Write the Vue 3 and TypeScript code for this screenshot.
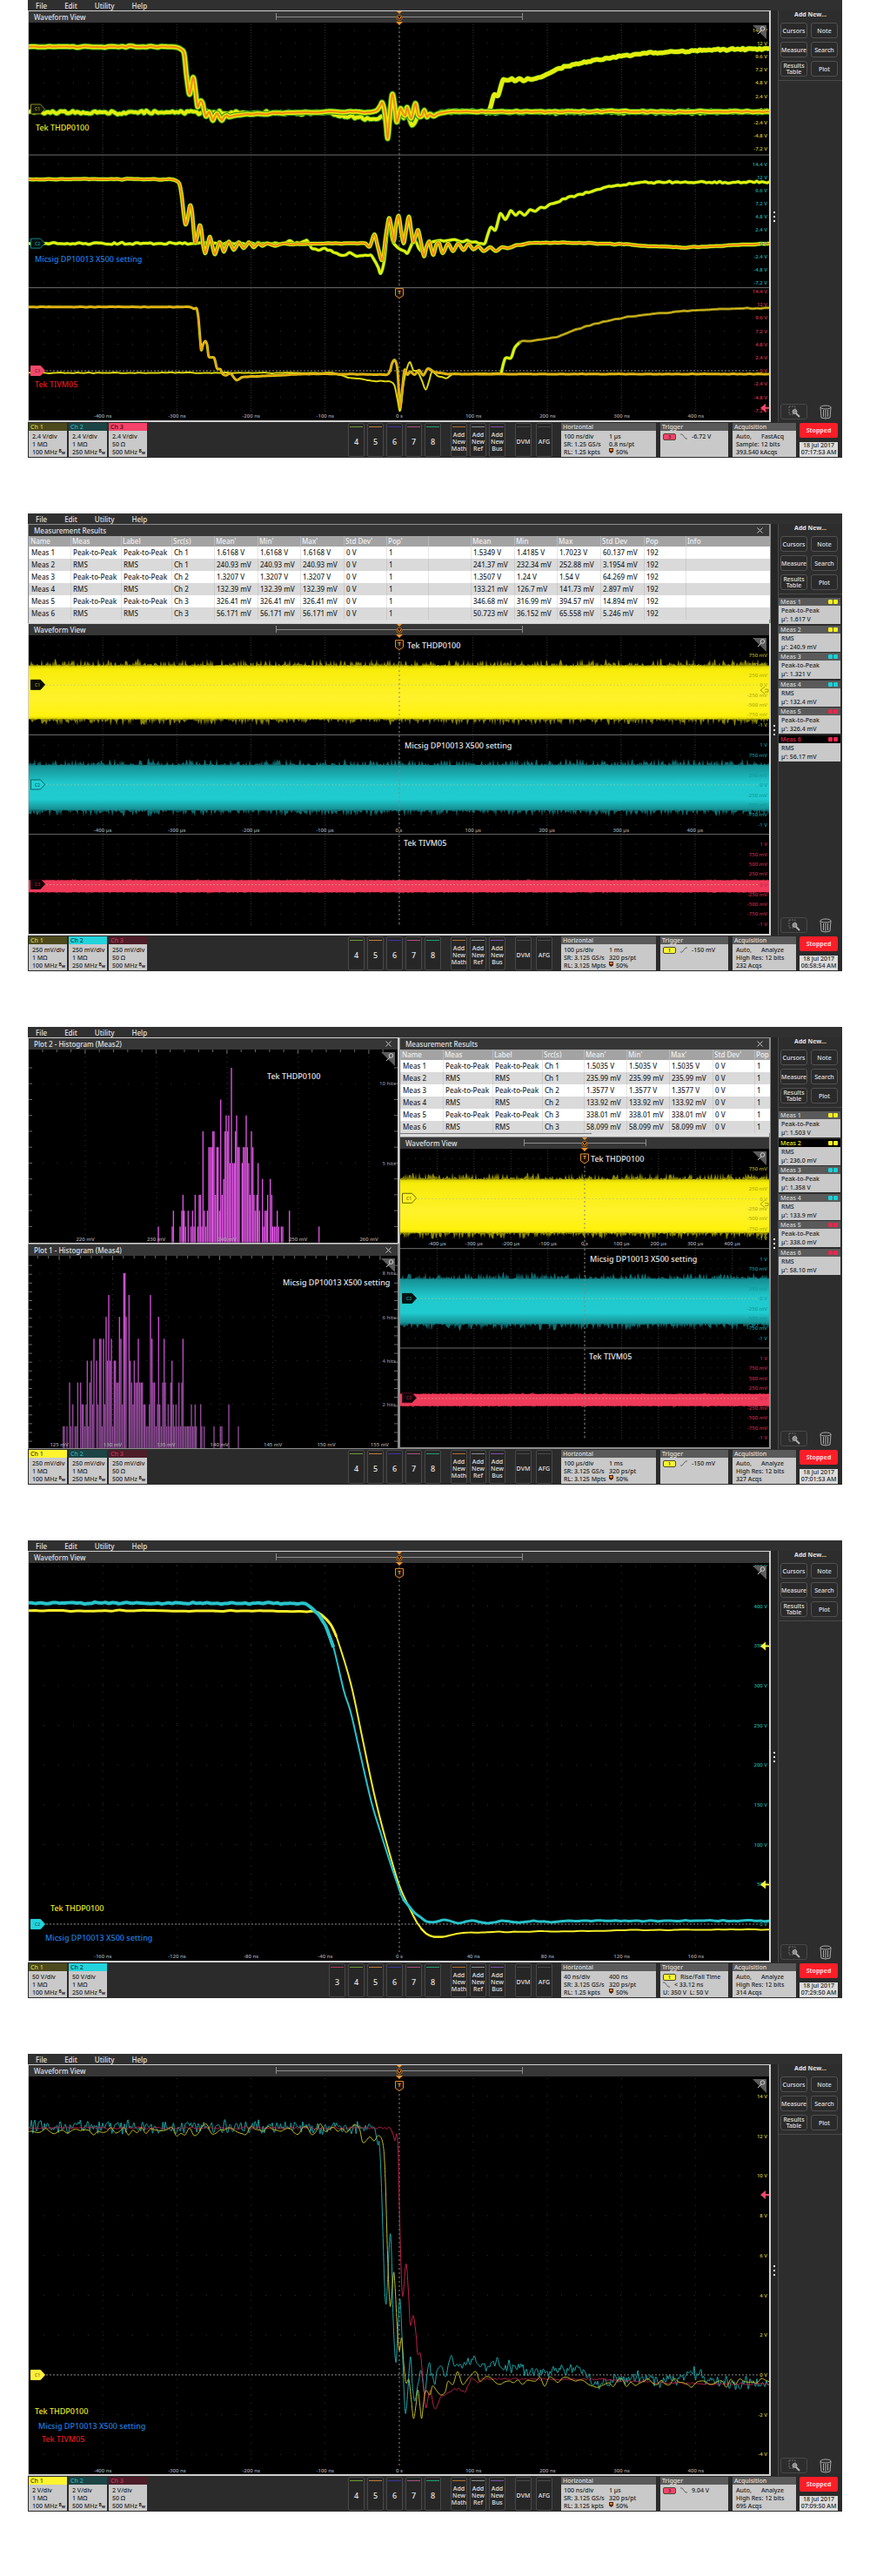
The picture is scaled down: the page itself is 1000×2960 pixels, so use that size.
<script setup lang="ts">
interface Stroke { d: string; color: string; width: number }
interface Band { spikes: string; core: string; dim: string; fill: string }
interface Label { x: number; y: number; text: string; color: string; anchor?: string; size?: string }
interface Tag { y: number; text: string; fill: string; line: string; ink: string }
interface Bar { x: number; y: number; h: number }
interface Plot {
  x: number; y: number; w: number; h: number
  columns: number[]; columnDash: string; rows: number[]; minor: number
  separators: number[]; zeros: number[]; centre: number | null
  bands: Band[]; strokes: Stroke[]; bars: Bar[]; ticks: string
  labels: Label[]; tags: Tag[]; badge: number | null
  arrows: { y: number; color: string; hollow?: boolean }[]
}
interface Table { widths: number[]; head: string[]; rows: string[][] }
interface Panel { title: string; bright: boolean; close?: boolean; overview?: boolean; table?: Table; scroll?: boolean; plot?: Plot }
interface Channel { name: string; bg: string; ink: string; lines: string[] }
interface Meas { name: string; kind: string; value: string; color: string; chips: number; active?: boolean }
interface Screen {
  columns: Panel[][]; channels: Channel[]; slots: { n: string; color: string }[]
  horizontal: string[]; trigger: { ch: string; color: string; rising: boolean; text: string; extra?: string[] }
  acquisition: string[]; time: string; meas: Meas[]
}

const YELLOW = '#d0d032'
const CYAN = '#18b6b6'
const RED = '#d83656'

/* deterministic noise, so every render draws the same traces */
function random(seed: number) {
  let a = seed
  return () => {
    a = (a + 0x6d2b79f5) | 0
    let t = Math.imul(a ^ (a >>> 15), 1 | a)
    t = (t + Math.imul(t ^ (t >>> 7), 61 | t)) ^ t
    return ((t ^ (t >>> 14)) >>> 0) / 4294967296
  }
}

type Point = [number, number]
type Scale = (y: number) => number
const scale = (f: number, offset: number): Scale => (y) => y * f - offset
const s1 = scale(0.3444, 0)
const s2 = scale(0.3508, 10.5)
const s3 = scale(0.3508, 10.2)
const s5 = scale(0.3508, 9.6)
const f1 = (n: number) => n.toFixed(1)

function parse(text: string): Point[] {
  return text.trim().split(/\s+/).map((p) => p.split(',').map(Number) as Point)
}

/* fills long segments with noisy samples */
function expand(points: Point[], step: number, noise: number, seed: number): Point[] {
  const rnd = random(seed)
  const out: Point[] = [points[0]]
  for (let i = 1; i < points.length; i++) {
    const [x0, y0] = points[i - 1]
    const [x1, y1] = points[i]
    const n = Math.floor((x1 - x0) / step)
    if (n > 1 && Math.abs(y1 - y0) < 60) {
      for (let k = 1; k < n; k++) {
        out.push([x0 + ((x1 - x0) * k) / n, y0 + ((y1 - y0) * k) / n + (rnd() + rnd() - 1) * noise])
      }
    }
    out.push([x1, y1])
  }
  return out
}

function curve(points: Point[], s: Scale): string {
  const p = points.map(([x, y]) => [x / 3, s(y)] as Point)
  let d = `M${f1(p[0][0])} ${f1(p[0][1])}`
  for (let i = 0; i < p.length - 1; i++) {
    const a = p[Math.max(0, i - 1)]
    const b = p[i]
    const c = p[i + 1]
    const e = p[Math.min(p.length - 1, i + 2)]
    const lim = (c[0] - b[0]) / 2
    const t1 = Math.min((c[0] - a[0]) / 6, lim)
    const t2 = Math.min((e[0] - b[0]) / 6, lim)
    const m1 = ((c[1] - a[1]) / (c[0] - a[0] || 1)) * t1
    const m2 = ((e[1] - b[1]) / (e[0] - b[0] || 1)) * t2
    d += `C${f1(b[0] + t1)} ${f1(b[1] + m1)} ${f1(c[0] - t2)} ${f1(c[1] - m2)} ${f1(c[0])} ${f1(c[1])}`
  }
  return d
}

function trace(text: string, s: Scale, step: number, noise: number, seed: number): string {
  return curve(expand(parse(text), step, noise, seed), s)
}

function glow(d: string, widths: number[], colors: string[]): Stroke[] {
  return widths.map((width, i) => ({ d, width, color: colors[i] }))
}

function band(x0: number, x1: number, top: number, bottom: number, amp: number, s: Scale, seed: number, fill: string, dim: string): Band {
  const rnd = random(seed)
  const edge = (y: number, dir: number, a: number, low: number) => {
    const pts: string[] = []
    for (let x = x0; x <= x1; x += 1) pts.push(`${x} ${f1(s(y + dir * (low + Math.pow(rnd(), 3) * a)))}`)
    return pts
  }
  const shape = (a: number, low: number) =>
    `M${edge(top, -1, a, low).join('L')}L${edge(bottom, 1, a, low).reverse().join('L')}Z`
  return { spikes: shape(amp, amp * 0.1), core: shape(amp * 0.15, 0), dim, fill }
}

function labels(x: number, s: Scale, ys: number[], texts: string[], color: string): Label[] {
  return texts.map((text, i) => ({ x, y: s(ys[i]), text, color, anchor: 'end', size: 'tiny' }))
}

function timeAxis(x0: number, pitch: number, y: number, texts: string[]): Label[] {
  return texts.map((text, i) => ({ x: x0 + pitch * (i + 1), y, text, color: '#a8a8a8', anchor: 'middle', size: 'tiny' }))
}

const note = (x: number, y: number, text: string, color: string): Label => ({ x, y, text, color, size: 'note' })
const range = (n: number, start: number, step: number) => Array.from({ length: n }, (_, i) => start + i * step)

const blank = (x: number, y: number, w: number, h: number): Plot => ({
  x, y, w, h, columns: [], columnDash: '1 2', rows: [], minor: 17, separators: [], zeros: [], centre: null,
  bands: [], strokes: [], bars: [], ticks: '', labels: [], tags: [], badge: null, arrows: []
})

const micros = ['-400 µs', '-300 µs', '-200 µs', '-100 µs', '0 s', '100 µs', '200 µs', '300 µs', '400 µs']
const nanos = ['-400 ns', '-300 ns', '-200 ns', '-100 ns', '0 s', '100 ns', '200 ns', '300 ns', '400 ns']
const mainColumns = range(9, 118, 85.2)

/* ---------- screen 1: three-slice FastAcq view ---------- */
const volts = ['14.4 V', '12 V', '9.6 V', '7.2 V', '4.8 V', '2.4 V', '0 V', '-2.4 V', '-4.8 V', '-7.2 V']
const c1Rows = range(10, 101, 43.9)
const c2Rows = range(10, 548, 43.9)
const c3Rows = range(10, 972, 44.2)
const outer = ['#2f8f1e', '#e4ee0c']
const heat = ['#2f8f1e', '#e4ee0c', '#f38a12']
const t1low = trace('97,374 1100,376 1180,385 1280,398 1305,396 1318,388 1330,405 1337,440 1345,375 1352,330 1362,395 1370,400 1381,380 1392,395 1400,375 1410,395 1420,418 1430,410 1440,390 1460,385 1500,382 1540,374 1600,374 2655,374', s1, 7, 7, 3)
const t1rise = trace('1686,372 1692,355 1703,318 1718,318 1728,285 1735,266 1750,268 1765,262 1775,270 1790,262 1805,270 1820,262 1835,265 1860,258 1890,246 1930,228 1980,215 2050,200 2140,187 2230,178 2320,172 2420,168 2540,164 2655,162', s1, 7, 4, 9)
const t1 = trace('97,156 590,156 610,158 625,165 635,180 643,250 652,312 658,300 664,262 669,265 675,310 681,356 687,345 692,336 699,345 704,370 710,388 716,380 722,374 728,388 734,402 741,388 748,378 756,390 765,402 773,390 782,385 790,390 800,388 840,382 900,380 1000,376 1120,373 1280,374 1300,368 1312,352 1318,342 1325,365 1331,410 1337,462 1343,400 1352,316 1360,345 1367,405 1374,390 1381,362 1390,378 1398,385 1404,358 1418,395 1432,345 1442,385 1455,387 1463,368 1472,390 1482,380 1495,388 1510,380 1545,373 1600,372 2655,373', s1, 12, 3, 21)
const t2low = trace('97,812 980,812 1000,803 1015,812 1060,803 1075,828 1100,835 1120,828 1150,842 1180,852 1205,843 1230,855 1280,852 1295,875 1313,912 1325,870 1335,780 1342,740 1352,800 1365,820 1380,832 1395,838 1405,845 1415,825 1430,800 1445,830 1460,840 1480,812 1500,805 1560,800 1620,806 1660,812 1672,812 1683,780 1693,758 1708,768 1718,735 1726,712 1742,732 1762,703 1778,718 1792,707 1808,718 1828,700 1845,705 1865,692 1880,693 1895,682 1920,675 1940,664 2000,648 2060,632 2130,618 2200,610 2300,608 2500,608 2655,606', s1, 9, 4, 33)
const t2 = trace('97,598 590,598 605,602 618,612 626,650 633,710 639,748 646,735 655,686 662,705 668,770 673,810 680,790 688,753 694,765 700,815 707,845 714,825 723,790 731,815 740,848 748,832 756,808 764,820 772,840 780,822 789,806 798,820 806,834 815,822 823,808 832,818 840,828 850,818 858,808 868,818 876,825 890,812 905,820 920,812 950,820 980,812 1010,815 1120,812 1260,812 1275,822 1291,782 1302,820 1318,868 1330,790 1341,728 1350,760 1359,805 1366,750 1375,720 1383,770 1392,812 1400,770 1410,722 1418,770 1425,808 1434,785 1442,768 1452,810 1462,855 1470,825 1480,805 1487,830 1495,850 1505,815 1515,812 1527,845 1545,812 1562,838 1580,812 1598,834 1615,814 1632,832 1650,822 1668,838 1690,825 1710,838 1730,825 1750,828 1780,818 1840,810 2000,810 2150,815 2250,822 2350,826 2450,822 2560,816 2655,812', s1, 14, 2, 41)
const t3low = trace('97,1244 1150,1244 1200,1260 1280,1270 1345,1273 1360,1285 1370,1330 1380,1370 1390,1290 1400,1240 1413,1208 1425,1235 1440,1240 1455,1270 1468,1300 1480,1270 1490,1240 1510,1255 1540,1262 1560,1248 1728,1246', s1, 14, 2, 51)
const t3step = trace('1728,1246 1742,1196 1762,1194 1775,1160 1795,1140', s1, 99, 0, 52)
const t3rise = trace('1790,1144 1800,1138 1830,1138 1870,1132 1920,1125 1970,1105 2050,1080 2150,1060 2260,1046 2400,1035 2530,1030 2655,1027', s1, 14, 2, 57)
const t3 = trace('97,1024 655,1024 668,1030 678,1030 684,1060 690,1130 694,1168 700,1150 708,1138 714,1150 720,1190 738,1194 748,1228 760,1232 768,1248 780,1252 795,1246 815,1268 835,1258 900,1255 1050,1248 1160,1248 1335,1250 1345,1238 1352,1212 1362,1202 1370,1230 1375,1300 1380,1360 1388,1290 1395,1235 1405,1250 1415,1240 1430,1250 1445,1235 1460,1252 1475,1230 1495,1240 1540,1248 1640,1248 2655,1248', s1, 14, 1, 61)

const plot1: Plot = {
  ...blank(33, 26, 851, 457),
  columns: mainColumns, columnDash: '1 2', rows: [...c1Rows, ...c2Rows, ...c3Rows].map(s1),
  separators: [s1(517), s1(960)], zeros: [s1(1237)], centre: 459,
  strokes: [
    ...glow(t1low, [6, 4], outer), ...glow(t1rise, [6, 5], outer), ...glow(t1, [7, 5, 2], heat),
    ...glow(t2low, [4, 3], outer), ...glow(t2, [5, 4, 2], heat),
    ...glow(t3low, [2], ['#dcd80e']), ...glow(t3step, [4, 3], outer), ...glow(t3rise, [3, 1], ['#8f8a14', '#f0c21c']), ...glow(t3, [3, 1], ['#d9cf14', '#f38a12'])
  ],
  labels: [
    ...labels(882, s1, c1Rows, volts, YELLOW), ...labels(882, s1, c2Rows, volts, CYAN), ...labels(882, s1, c3Rows, volts, RED),
    ...timeAxis(33, 85.2, s1(1388), nanos),
    note(41, s1(427), 'Tek THDP0100', '#e8e82a'), note(40, s1(865), 'Micsig DP10013 X500 setting', '#1f7fe0'), note(40, s1(1282), 'Tek TIVM05', '#e01c1c')
  ],
  tags: [
    { y: s1(364), text: 'C1', fill: '#15150a', line: '#8a8a1e', ink: '#a5a52c' },
    { y: s1(812), text: 'C2', fill: '#041414', line: '#148080', ink: '#1a9d9d' },
    { y: s1(1237), text: 'C3', fill: '#f2486a', line: '#f2486a', ink: '#7c1a30' }
  ],
  badge: s1(976), arrows: [{ y: s1(1361), color: '#f2486a' }]
}

/* ---------- screens 2 and 3: noise bands ---------- */
const r1 = [461, 493, 526, 560, 592, 624, 657, 689, 721]
const r2 = [789, 821, 856, 888, 919, 953, 985, 1016, 1049]
const r3 = [1114, 1146, 1179, 1211, 1246, 1277, 1309, 1342, 1375]
const mv = ['1 V', '750 mV', '500 mV', '250 mV', '0 V', '-250 mV', '-500 mV', '-750 mV', '-1 V']

function noisePlot(x: number, w: number, s: Scale, seed: number, axisY: number): Plot {
  const pitch = w / 10
  const mid = x + Math.round(w / 2)
  const right = x + w
  return {
    ...blank(x, 140, w, 343),
    columns: range(9, x + pitch, pitch), minor: w / 50, rows: [...r1, ...r2, ...r3].map(s),
    separators: [s(755), s(1081)], zeros: [s(592), s(919), s(1246)], centre: mid,
    bands: [
      band(x, right, 530, 702, 22, s, seed, 'url(#yellow)', '#8c8704'),
      band(x, right, 856, 1000, 22, s, seed + 1, 'url(#cyan)', '#0e6c70'),
      band(x, right, 1232, 1270, 4, s, seed + 2, '#f03a5a', '#b82440')
    ],
    labels: [
      ...labels(right - 2, s, r1.slice(1), mv.slice(1), '#b3ad18'), ...labels(right - 2, s, r2, mv, '#129a9c'), ...labels(right - 2, s, r3, mv, '#c42a4a'),
      ...timeAxis(x, pitch, s(axisY), micros),
      note(mid + (w > 500 ? 9 : 7), s(463), 'Tek THDP0100', '#e4e4e4'), note(mid + 6, s(789), 'Micsig DP10013 X500 setting', '#e4e4e4'), note(mid + 5, s(1110), 'Tek TIVM05', '#e4e4e4')
    ],
    badge: s(458), arrows: [{ y: s(609), color: '#a59f10', hollow: true }]
  }
}

const plot2: Plot = {
  ...noisePlot(33, 851, s2, 100, 1066),
  tags: [
    { y: s2(591), text: 'C1', fill: '#0c0c04', line: '#0c0c04', ink: '#a5a52c' },
    { y: s2(918), text: 'C2', fill: '#20d0d4', line: '#0a6466', ink: '#0a6466' },
    { y: s2(1244), text: 'C3', fill: '#100308', line: '#100308', ink: '#a32640' }
  ]
}
const plot3: Plot = {
  ...noisePlot(460, 424, s3, 200, 739),
  tags: [
    { y: s3(590), text: 'C1', fill: '#fff21c', line: '#6c6806', ink: '#6c6806' },
    { y: s3(918), text: 'C2', fill: '#031212', line: '#031212', ink: '#1a9d9d' },
    { y: s3(1244), text: 'C3', fill: '#100308', line: '#4a0c1c', ink: '#a32640' }
  ]
}

/* ---------- screen 3: histograms ---------- */
function bars(text: string, base: number, hit: number): Bar[] {
  return text.trim().split(/\s+/).map((p) => {
    const [x, n] = p.split(':').map(Number)
    const y = s3(base - n * hit)
    return { x: x / 3, y, h: s3(base) - y }
  })
}

function ticks(p: { x: number; y: number; w: number; h: number }, xs: number[], ys: number[], every: number, first: number): string {
  const top = xs.map((x, i) => `M${f1(x)} ${p.y}v${(i - first) % every === 0 ? 5 : 3}`).join('')
  const side = ys.map((y) => `M${p.x} ${f1(y)}h4M${p.x + p.w} ${f1(y)}h-4`).join('')
  return top + side
}

const h2 = blank(33, 26, 424, 222)
const hist2: Plot = {
  ...h2, columns: [98, 180, 261, 343, 424], columnDash: '1 5', rows: [s3(215), s3(475)], minor: 16.3,
  bars: bars('546:1 594:1 598:2 621:1 627:2 631:3 635:2 640:1 649:2 659:1 664:2 669:1 673:3 682:1 687:3 691:3 696:1 700:7 705:2 710:1 715:2 720:6 725:6 730:6 734:7 738:7 743:3 748:6 752:6 757:2 761:9 766:3 771:4 776:7 780:8 785:7 789:8 793:5 798:11 803:5 808:5 812:7 816:8 821:6 825:6 835:5 839:6 844:6 849:8 853:6 858:5 862:3 867:7 872:6 876:3 881:2 886:3 890:5 895:2 905:4 909:1 914:2 919:2 923:3 932:4 937:3 941:1 946:1 951:1 956:2 961:1 970:1 975:1 998:2 1100:1', 735, 52),
  ticks: ticks(h2, range(25, 49, 16.3), range(11, s3(163), 18.24), 5, 3),
  labels: [
    ...['220 mV', '230 mV', '240 mV', '250 mV', '260 mV'].map((text, i): Label => ({ x: 98 + i * 81.5, y: s3(724), text, color: '#a8a8a8', anchor: 'middle', size: 'tiny' })),
    ...labels(455, s3, [215, 475], ['10 hits', '5 hits'], '#8d8d8d'),
    note(307, s3(192), 'Tek THDP0100', '#e4e4e4')
  ]
}
const h1 = blank(33, 263, 424, 221)
const hist1: Plot = {
  ...h1, columns: range(7, 68, 61.4), columnDash: '1 5', rows: [836, 980, 1122, 1265].map(s3), minor: 12.3,
  bars: bars('218:1 222:1 231:1 240:3 245:1 251:2 259:1 264:1 268:3 278:3 283:2 287:2 292:1 297:2 301:4 305:1 310:3 315:4 320:2 324:5 333:4 338:2 344:5 348:5 352:1 357:5 361:2 366:6 371:4 375:7 380:4 384:5 389:1 394:4 398:4 403:3 408:3 412:6 417:5 422:2 427:8 431:8 435:6 445:7 449:4 454:3 459:2 463:4 468:3 473:3 477:5 482:3 487:3 491:3 496:2 500:2 505:1 510:1 515:2 519:7 524:5 528:3 533:3 538:1 543:2 547:6 551:2 556:1 561:3 566:5 570:3 575:1 580:2 585:1 589:3 593:4 598:2 602:1 607:2 612:1 617:3 622:1 627:3 631:5 636:1 641:1 646:1 650:1 655:1 660:2 664:1 669:1 673:2 677:1 692:2 696:1 704:1 738:1 760:1 765:1 789:2 822:1', 1409, 71.7),
  ticks: ticks(h1, range(33, 43.4, 12.3), range(21, s3(836) - 9, 10.1), 5, 2),
  labels: [
    ...['125 mV', '130 mV', '135 mV', '140 mV', '145 mV', '150 mV', '155 mV'].map((text, i): Label => ({ x: 68 + i * 61.4, y: s3(1398), text, color: '#a8a8a8', anchor: 'middle', size: 'tiny' })),
    ...labels(455, s3, [836, 980, 1122, 1265], ['8 hits', '6 hits', '4 hits', '2 hits'], '#8d8d8d'),
    note(325, s3(867), 'Micsig DP10013 X500 setting', '#e4e4e4')
  ]
}

/* ---------- screen 4 ---------- */
const rows4 = range(10, 115, 130.2)
const plot4: Plot = {
  ...blank(33, 26, 851, 457),
  columns: mainColumns, columnDash: '1 8.1', rows: rows4.map(s2), zeros: [s2(1287)], centre: 459,
  strokes: [
    { d: trace('97,260 1085,262 1110,275 1140,305 1160,345', s2, 24, 3, 71), color: '#f5ec28', width: 3 },
    { d: trace('1120,283 1140,305 1160,345 1210,500 1250,680 1290,860 1330,1010 1375,1155 1410,1230 1440,1285 1470,1318 1495,1328 1530,1328', s2, 99, 0, 72), color: '#f5ec28', width: 2 },
    { d: trace('1450,1300 1470,1318 1495,1328 1530,1328 1575,1318 1620,1314 1900,1311 2200,1306 2655,1305', s2, 24, 2, 73), color: '#f5ec28', width: 2 },
    { d: trace('97,235 1040,236 1055,238 1075,252 1100,275 1125,315 1150,380', s2, 12, 3, 74), color: '#27c3cb', width: 4 },
    { d: trace('1125,315 1150,380 1185,520 1210,595 1240,720 1280,885 1310,980 1340,1070 1370,1155 1390,1205 1430,1250', s2, 99, 0, 75), color: '#27c3cb', width: 2 },
    { d: trace('1390,1205 1430,1250 1470,1278 1500,1280 1530,1273 1550,1276 1580,1284 1610,1278 1630,1275 1650,1279 1680,1284 1730,1276 1790,1282 1840,1276 1900,1281 1960,1276 2655,1276', s2, 16, 2, 76), color: '#27c3cb', width: 3 }
  ],
  labels: [
    ...labels(882, s2, rows4, ['450 V', '400 V', '350 V', '300 V', '250 V', '200 V', '150 V', '100 V', '50 V', '0 V'], CYAN),
    ...timeAxis(33, 85.2, s2(1393), ['-160 ns', '-120 ns', '-80 ns', '-40 ns', '0 s', '40 ns', '80 ns', '120 ns', '160 ns']),
    note(58, s2(1234), 'Tek THDP0100', '#e8e82a'), note(52, s2(1331), 'Micsig DP10013 X500 setting', '#1f7fe0')
  ],
  tags: [{ y: s2(1287), text: 'C2', fill: '#22d3dc', line: '#22d3dc', ink: '#0a5a60' }],
  badge: s2(135), arrows: [{ y: s2(376), color: '#fff03c' }, { y: s2(1157), color: '#fff03c' }]
}

/* ---------- screen 5 ---------- */
const rows5 = range(10, 166, 130.4)
const plot5: Plot = {
  ...blank(33, 26, 851, 457),
  columns: mainColumns, columnDash: '1 8.1', rows: rows5.map(s5), zeros: [s5(1079)], centre: 459,
  strokes: [
    { d: trace('97,266 1280,268 1293,275 1300,310 1308,320 1315,450 1325,760 1331,848 1337,760 1345,620 1350,680 1356,900 1365,1038 1372,930 1379,830 1386,950 1392,1110 1398,1205 1405,1150 1415,1020 1422,1110 1430,1165 1440,1115 1450,1065 1458,1100 1465,1140 1475,1060 1482,1040 1490,1075 1500,1110 1510,1060 1520,1050 1535,1085 1545,1050 1556,1015 1570,1050 1630,1030 1680,1055 1710,1038 1780,1060 1900,1075 1960,1065 1990,1048 2015,1065 2040,1110 2070,1112 2110,1098 2180,1085 2280,1102 2350,1085 2390,1075 2450,1088 2520,1105 2655,1108', s5, 4, 26, 81), color: '#1fa9ad', width: 1 },
    { d: trace('97,270 1345,270 1355,290 1362,312 1368,290 1373,350 1378,560 1385,780 1390,818 1400,715 1408,800 1415,915 1425,885 1435,950 1440,1010 1450,1010 1458,1090 1468,1185 1484,1130 1495,1180 1502,1190 1520,1150 1560,1130 1580,1122 1605,1135 1625,1090 1650,1105 1660,1092 1750,1093 2100,1095 2300,1107 2655,1110', s5, 6, 5, 82), color: '#c0224a', width: 1 },
    { d: trace('97,282 1240,274 1252,318 1275,300 1305,295 1320,320 1328,420 1337,700 1345,852 1352,800 1358,742 1364,820 1370,930 1377,1000 1385,958 1392,1040 1400,1105 1410,1095 1418,1160 1426,1222 1434,1180 1441,1128 1448,1180 1454,1222 1462,1160 1470,1130 1482,1145 1492,1115 1505,1130 1535,1135 1545,1100 1562,1110 1578,1068 1595,1110 1615,1090 1640,1068 1655,1100 1675,1085 1710,1105 2000,1095 2060,1120 2100,1105 2655,1102', s5, 15, 22, 83), color: '#c2bd24', width: 1 }
  ],
  labels: [
    ...labels(882, s5, rows5, ['14 V', '12 V', '10 V', '8 V', '6 V', '4 V', '2 V', '0 V', '-2 V', '-4 V'], YELLOW),
    ...timeAxis(33, 85.2, s5(1391), nanos),
    note(40, s5(1199), 'Tek THDP0100', '#e8e82a'), note(44, s5(1247), 'Micsig DP10013 X500 setting', '#1f7fe0'), note(48, s5(1290), 'Tek TIVM05', '#e01c1c')
  ],
  tags: [{ y: s5(1079), text: 'C1', fill: '#fff03c', line: '#fff03c', ink: '#6c6806' }],
  badge: s5(130), arrows: [{ y: s5(489), color: '#f2486a' }]
}

/* ---------- measurement tables ---------- */
const kinds = ['Peak-to-Peak', 'RMS']
const src = (i: number) => `Ch ${Math.floor(i / 2) + 1}`
const acq2 = ['1.6168 V', '240.93 mV', '1.3207 V', '132.39 mV', '326.41 mV', '56.171 mV']
const all2 = [
  ['1.5349 V', '1.4185 V', '1.7023 V', '60.137 mV'], ['241.37 mV', '232.34 mV', '252.88 mV', '3.1954 mV'],
  ['1.3507 V', '1.24 V', '1.54 V', '64.269 mV'], ['133.21 mV', '126.7 mV', '141.73 mV', '2.897 mV'],
  ['346.68 mV', '316.99 mV', '394.57 mV', '14.894 mV'], ['50.723 mV', '36.152 mV', '65.558 mV', '5.246 mV']
]
const acq3 = ['1.5035 V', '235.99 mV', '1.3577 V', '133.92 mV', '338.01 mV', '58.099 mV']
const row = (v: string, i: number) => [`Meas ${i + 1}`, kinds[i % 2], kinds[i % 2], src(i), v, v, v, '0 V', '1']
const head = ['Name', 'Meas', 'Label', 'Src(s)', "Mean'", "Min'", "Max'", "Std Dev'"]
const table2: Table = {
  widths: [48, 58, 58, 49, 50, 49, 50, 49, 48, 49, 50, 49, 50, 50, 48, 96],
  head: [...head, "Pop'", '', 'Mean', 'Min', 'Max', 'Std Dev', 'Pop', 'Info'],
  rows: acq2.map((v, i) => [...row(v, i), '', ...all2[i], '192', ''])
}
const table3: Table = { widths: [49, 57, 57, 48, 49, 49, 50, 48, 17], head: [...head, 'Pop'], rows: acq3.map(row) }

/* ---------- chrome ---------- */
const dark = [
  { bg: '#4c4a1c', ink: '#d6d23a' }, { bg: '#1c4444', ink: '#25b4b4' }, { bg: '#4c1c28', ink: '#cc3354' }
]
const lit = [
  { bg: '#fff52e', ink: '#3c3a08' }, { bg: '#22d3dc', ink: '#0a3c40' }, { bg: '#f5436a', ink: '#3c0a14' }
]
function channels(active: number, div: string, bandwidth: string[]): Channel[] {
  return bandwidth.map((bw, i) => ({
    name: `Ch ${i + 1}`, ...(i === active ? lit[i] : dark[i]), lines: [div, i === 2 ? '50 Ω' : '1 MΩ', bw]
  }))
}
const slots = [
  { n: '4', color: '#6f9a34' }, { n: '5', color: '#c07c34' }, { n: '6', color: '#3b35a0' }, { n: '7', color: '#a8507e' }, { n: '8', color: '#1fa070' }
]
const chipColors = ['#f4ee20', '#18d0d6', '#e8264c']
function measures(values: string[], active: number, chips: number): Meas[] {
  return values.map((value, i) => ({
    name: `Meas ${i + 1}`, kind: kinds[i % 2], value: `µ': ${value}`, color: chipColors[Math.floor(i / 2)], chips, active: i === active
  }))
}
const mhz = ['100 MHz', '250 MHz', '500 MHz']
const view = (plot: Plot): Panel => ({ title: 'Waveform View', bright: true, overview: true, plot })
const fall = { rising: false, ch: '3', color: '#f5436a' }
const rise = { rising: true, ch: '1', color: '#fff52e' }

const screens: Screen[] = [
  {
    columns: [[view(plot1)]], channels: channels(2, '2.4 V/div', mhz), slots,
    horizontal: ['100 ns/div', '1 µs', 'SR: 1.25 GS/s', '0.8 ns/pt', 'RL: 1.25 kpts', '50%'],
    trigger: { ...fall, text: '-6.72 V' }, acquisition: ['Auto,', 'FastAcq', 'Sample: 12 bits', '393.540 kAcqs'], time: '07:17:53 AM', meas: []
  },
  {
    columns: [[{ title: 'Measurement Results', bright: false, close: true, table: table2 }, view(plot2)]],
    channels: channels(1, '250 mV/div', mhz), slots,
    horizontal: ['100 µs/div', '1 ms', 'SR: 3.125 GS/s', '320 ps/pt', 'RL: 3.125 Mpts', '50%'],
    trigger: { ...rise, text: '-150 mV' }, acquisition: ['Auto,', 'Analyze', 'High Res: 12 bits', '232 Acqs'], time: '06:58:54 AM',
    meas: measures(['1.617 V', '240.9 mV', '1.321 V', '132.4 mV', '326.4 mV', '56.17 mV'], 5, 2)
  },
  {
    columns: [
      [{ title: 'Plot 2 - Histogram (Meas2)', bright: true, close: true, plot: hist2 }, { title: 'Plot 1 - Histogram (Meas4)', bright: false, close: true, plot: hist1 }],
      [{ title: 'Measurement Results', bright: false, close: true, table: table3, scroll: true }, { ...view(plot3), bright: false }]
    ],
    channels: channels(0, '250 mV/div', mhz), slots,
    horizontal: ['100 µs/div', '1 ms', 'SR: 3.125 GS/s', '320 ps/pt', 'RL: 3.125 Mpts', '50%'],
    trigger: { ...rise, text: '-150 mV' }, acquisition: ['Auto,', 'Analyze', 'High Res: 12 bits', '327 Acqs'], time: '07:01:53 AM',
    meas: measures(['1.503 V', '236.0 mV', '1.358 V', '133.9 mV', '338.0 mV', '58.10 mV'], 1, 2)
  },
  {
    columns: [[view(plot4)]], channels: channels(1, '50 V/div', mhz.slice(0, 2)), slots: [{ n: '3', color: '#b03a58' }, ...slots],
    horizontal: ['40 ns/div', '400 ns', 'SR: 3.125 GS/s', '320 ps/pt', 'RL: 1.25 kpts', '50%'],
    trigger: { ch: '1', color: '#fff52e', rising: false, text: 'Rise/Fall Time', extra: ['< 33.12 ns', 'U: 350 V  L: 50 V'] },
    acquisition: ['Auto,', 'Analyze', 'High Res: 12 bits', '314 Acqs'], time: '07:29:50 AM', meas: []
  },
  {
    columns: [[view(plot5)]], channels: channels(0, '2 V/div', ['100 MHz', '500 MHz', '500 MHz']), slots,
    horizontal: ['100 ns/div', '1 µs', 'SR: 3.125 GS/s', '320 ps/pt', 'RL: 3.125 kpts', '50%'],
    trigger: { ...fall, text: '9.04 V' }, acquisition: ['Auto,', 'Analyze', 'High Res: 12 bits', '695 Acqs'], time: '07:09:50 AM', meas: []
  }
]

const menus = ['File', 'Edit', 'Utility', 'Help']
const tools = ['Cursors', 'Note', 'Measure', 'Search', 'Results Table', 'Plot']
const adders = [
  { n: 'Add New Math', color: '#b06f2c' }, { n: 'Add New Ref', color: '#8c8c8c' }, { n: 'Add New Bus', color: '#7c52a8' }
]
</script>

<template>
  <main class="page">
    <section v-for="(screen, si) in screens" :key="si" class="screen">
      <nav class="menu">
        <button v-for="m in menus" :key="m" type="button">{{ m }}</button>
      </nav>

      <div class="body">
        <div v-for="(column, ci) in screen.columns" :key="ci" class="column">
          <section v-for="panel in column" :key="panel.title" class="panel" :class="{ bright: panel.bright, results: panel.table, last: panel.overview }">
            <header class="title">
              <h2>{{ panel.title }}</h2>
              <div v-if="panel.overview" class="overview">
                <svg class="marker" width="10" height="17" viewBox="0 0 10 17" aria-hidden="true">
                  <path d="M2 0h6L5 3zM1 12h8l-4 4z" fill="#f0912a" />
                  <circle cx="5" cy="7.500" r="3.200" fill="#241406" stroke="#b86c1e" />
                  <path d="M3.600 6v2l1.400 1 1.400-1V6" fill="none" stroke="#f0912a" />
                </svg>
              </div>
              <button v-if="panel.close" type="button" class="close" aria-label="Close">
                <svg width="7" height="7" viewBox="0 0 7 7"><path d="M.5.5l6 6m0-6l-6 6" stroke="#c8c8c8" /></svg>
              </button>
            </header>

            <template v-if="panel.table">
              <table>
                <colgroup>
                  <col v-for="(w, i) in panel.table.widths" :key="i" :style="{ width: w + 'px' }" />
                </colgroup>
                <thead>
                  <tr><th v-for="(h, i) in panel.table.head" :key="i" scope="col">{{ h }}</th></tr>
                </thead>
                <tbody>
                  <tr v-for="r in panel.table.rows" :key="r[0]"><td v-for="(c, i) in r" :key="i">{{ c }}</td></tr>
                </tbody>
              </table>
              <div class="strip" :class="{ scroll: panel.scroll }"></div>
            </template>

            <svg v-if="panel.plot" class="plot" :viewBox="`${panel.plot.x} ${panel.plot.y} ${panel.plot.w} ${panel.plot.h}`" role="img" :aria-label="panel.title">
              <defs>
                <linearGradient id="yellow" x1="0" y1="0" x2="0" y2="1">
                  <stop offset="0" stop-color="#d6ce06" /><stop offset=".08" stop-color="#f7ec08" />
                  <stop offset=".6" stop-color="#fff22c" /><stop offset=".93" stop-color="#fff20c" /><stop offset="1" stop-color="#d6ce06" />
                </linearGradient>
                <linearGradient id="cyan" x1="0" y1="0" x2="0" y2="1">
                  <stop offset="0" stop-color="#158c90" /><stop offset=".4" stop-color="#1fc8cc" />
                  <stop offset=".75" stop-color="#20ccd0" /><stop offset="1" stop-color="#14888c" />
                </linearGradient>
                <linearGradient id="violet" gradientUnits="userSpaceOnUse" x1="0" :y1="panel.plot.y + panel.plot.h * 0.45" x2="0" :y2="panel.plot.y + panel.plot.h">
                  <stop offset="0" stop-color="#d852dc" /><stop offset=".5" stop-color="#c24cc8" /><stop offset="1" stop-color="#804888" />
                </linearGradient>
              </defs>

              <line v-for="(y, i) in panel.plot.rows" :key="'r' + i" :x1="panel.plot.x + panel.plot.minor" :x2="panel.plot.x + panel.plot.w - 30" :y1="y" :y2="y"
                class="grid" :stroke-dasharray="`1 ${panel.plot.minor - 1}`" />
              <line v-for="(x, i) in panel.plot.columns" :key="'c' + i" :x1="x" :x2="x" :y1="panel.plot.y + 2" :y2="panel.plot.y + panel.plot.h - 9"
                class="grid" :stroke-dasharray="panel.plot.columnDash" />
              <path v-if="panel.plot.ticks" :d="panel.plot.ticks" stroke="#6a6a6a" fill="none" />

              <g v-for="(b, i) in panel.plot.bands" :key="'b' + i">
                <path :d="b.spikes" :fill="b.dim" /><path :d="b.core" :fill="b.fill" />
              </g>
              <rect v-for="(b, i) in panel.plot.bars" :key="'h' + i" :x="b.x - 0.7" :y="b.y" width="1.400" :height="b.h" fill="url(#violet)" />

              <line v-for="(y, i) in panel.plot.zeros" :key="'z' + i" :x1="panel.plot.x + 20" :x2="panel.plot.x + panel.plot.w - 12" :y1="y" :y2="y"
                class="zero" :class="{ faint: panel.plot.bands.length }" />
              <line v-if="panel.plot.centre" :x1="panel.plot.centre" :x2="panel.plot.centre" :y1="panel.plot.y + 5" :y2="panel.plot.y + panel.plot.h - 10" class="centre" />

              <path v-for="(s, i) in panel.plot.strokes" :key="'s' + i" :d="s.d" :stroke="s.color" :stroke-width="s.width" class="trace" />
              <line v-for="y in panel.plot.separators" :key="'p' + y" :x1="panel.plot.x" :x2="panel.plot.x + panel.plot.w" :y1="y" :y2="y" stroke="#6e6e6e" />

              <text v-for="(l, i) in panel.plot.labels" :key="'l' + i" :x="l.x" :y="l.y" dy=".36em" :fill="l.color" :text-anchor="l.anchor ?? 'start'" :class="l.size">{{ l.text }}</text>

              <g v-for="t in panel.plot.tags" :key="t.text" :transform="`translate(${panel.plot.x + 2} ${t.y - 6})`">
                <path d="M.5.5h11l5 5.500-5 5.500H.5z" :fill="t.fill" :stroke="t.line" />
                <text x="8" y="8" class="mini" text-anchor="middle" :fill="t.ink">{{ t.text }}</text>
              </g>

              <g v-if="panel.plot.badge && panel.plot.centre" :transform="`translate(${panel.plot.centre - 5} ${panel.plot.badge - 5})`">
                <path d="M.5.5h9v8l-4.500 3-4.500-3z" fill="#1c0f04" stroke="#e08a2c" />
                <text x="5" y="7" class="mini strong" text-anchor="middle" fill="#f0a04c">T</text>
              </g>

              <path v-for="a in panel.plot.arrows" :key="'a' + a.y" :transform="`translate(${panel.plot.x + panel.plot.w} ${a.y})`"
                :d="a.hollow ? 'M-10 0l5-4M-10 0l5 4M-5-1h4v3h-4' : 'M-10 0l6-5v4h4v2h-4v4z'" :fill="a.hollow ? 'none' : a.color" :stroke="a.hollow ? a.color : 'none'" />

              <g :transform="`translate(${panel.plot.x + panel.plot.w - 19} ${panel.plot.y + 3})`">
                <path d="M0 0h16v16z" fill="#5c5c5c" />
                <circle cx="11.500" cy="4" r="2.300" fill="none" stroke="#d0d0d0" /><path d="M10 6l-4 4" stroke="#d0d0d0" />
              </g>
            </svg>
          </section>
        </div>

        <div class="splitter"><i></i><i></i><i></i></div>

        <aside class="side">
          <h3>Add New...</h3>
          <div class="tools">
            <button v-for="t in tools" :key="t" type="button">{{ t }}</button>
          </div>
          <div class="measures">
            <article v-for="m in screen.meas" :key="m.name" class="meas">
              <header :class="{ active: m.active }" :style="m.active ? { color: m.color } : undefined">
                <span>{{ m.name }}</span>
                <span class="chips"><i v-for="n in m.chips" :key="n" :style="{ background: m.color }"></i></span>
              </header>
              <p>{{ m.kind }}<br />{{ m.value }}</p>
            </article>
          </div>
          <div class="drawer">
            <button type="button" aria-label="Zoom box">
              <svg width="16" height="14" viewBox="0 0 16 14">
                <path d="M2 1v9h5M2 1h7v3" fill="none" stroke="#6c6c6c" stroke-dasharray="2 1" />
                <circle cx="8.500" cy="7" r="2.500" fill="#8c8c8c" stroke="#b4b4b4" /><path d="M10 9l4 4" stroke="#b4b4b4" stroke-width="2" />
              </svg>
            </button>
            <svg width="14" height="17" viewBox="0 0 14 17" aria-label="Trash" role="img">
              <ellipse cx="7" cy="3" rx="6" ry="2" fill="none" stroke="#a8a8a8" />
              <path d="M1 3l1 12q5 2 10 0l1-12M4.500 6v8M7 6v9M9.500 6v8" fill="none" stroke="#a8a8a8" />
            </svg>
          </div>
        </aside>
      </div>

      <footer class="bar">
        <div class="channels">
          <article v-for="c in screen.channels" :key="c.name" class="card channel">
            <h4 :style="{ background: c.bg, color: c.ink }">{{ c.name }}</h4>
            <p><span v-for="l in c.lines" :key="l">{{ l }}</span></p>
            <b>B<sub>w</sub></b>
          </article>
        </div>
        <div class="group">
          <button v-for="s in screen.slots" :key="s.n" type="button" class="slot number"><i :style="{ background: s.color }"></i>{{ s.n }}</button>
        </div>
        <div class="group">
          <button v-for="s in adders" :key="s.n" type="button" class="slot"><i :style="{ background: s.color }"></i>{{ s.n }}</button>
        </div>
        <div class="group wide">
          <button type="button" class="slot"><i></i>DVM</button>
          <button type="button" class="slot"><i></i>AFG</button>
        </div>
        <article class="card horizontal">
          <h4>Horizontal</h4>
          <div class="pairs">
            <span v-for="(t, i) in screen.horizontal" :key="i">
              <svg v-if="i === 5" width="8" height="7" viewBox="0 0 8 7" aria-hidden="true"><path d="M0 0h5v4L2.500 6 0 4z" fill="#4c2410" /><path d="M1 1h3v2H1z" fill="#e8862c" /></svg>{{ t }}</span>
          </div>
        </article>
        <article class="card trigger">
          <h4>Trigger</h4>
          <p class="source">
            <em :style="{ background: screen.trigger.color }">{{ screen.trigger.ch }}</em>
            <svg v-if="!screen.trigger.extra" width="8" height="7" viewBox="0 0 8 7"><path :d="screen.trigger.rising ? 'M0 6h2l4-5h2' : 'M0 1h2l4 5h2'" fill="none" stroke="#666" /></svg>
            <span>{{ screen.trigger.text }}</span>
          </p>
          <template v-if="screen.trigger.extra">
            <p class="source">
              <svg width="8" height="7" viewBox="0 0 8 7"><path d="M0 1h2l4 5h2" fill="none" stroke="#666" /></svg>
              <span>{{ screen.trigger.extra[0] }}</span>
            </p>
            <p class="source">{{ screen.trigger.extra[1] }}</p>
          </template>
        </article>
        <article class="card acquisition">
          <h4>Acquisition</h4>
          <p>
            <span class="mode"><span>{{ screen.acquisition[0] }}</span><span>{{ screen.acquisition[1] }}</span></span>
            <span>{{ screen.acquisition[2] }}</span><span>{{ screen.acquisition[3] }}</span>
          </p>
        </article>
        <div class="status">
          <button type="button">Stopped</button>
          <time>18 Jul 2017<br />{{ screen.time }}</time>
        </div>
      </footer>
    </section>
  </main>
</template>

<style>
body { background: #fff; }
</style>

<style scoped>
.page { display: flex; flex-direction: column; gap: 64px; padding: 0 32px 74px; font: 500 7px/9px "Noto Sans", "Open Sans", sans-serif; color: #e0e0e0; }
h2, h3, h4, p { margin: 0; font: inherit; }
button { font: inherit; color: inherit; padding: 0; border: 0; background: none; }
.screen { background: #2d2d2d; min-width: 0; }

.menu { height: 12px; display: flex; align-items: center; gap: 20px; padding-left: 9px; background: #303030; font-size: 8px; line-height: 11px; }

.body { display: flex; }
.column { flex: 1 1 0; min-width: 0; }
.panel { border: 1px solid #8c8c8c; border-right-width: 2px; }
.panel.last { border-bottom-width: 2px; }
.panel.results { border-bottom: 0; }
.panel.bright { border-color: #cfcfcf; }
.title { position: relative; height: 13px; display: flex; align-items: center; justify-content: space-between; padding: 0 7px 0 6px; background: #363636; font-size: 8px; line-height: 12px; }
.overview { position: absolute; left: 33.4%; right: 33.3%; top: 2px; height: 8px; border: solid #8c8c8c; border-width: 0 1px; background: linear-gradient(#8c8c8c, #8c8c8c) 0 50% / 100% 1px no-repeat; }
.marker { position: absolute; left: 50%; top: -2px; margin-left: -5px; }
.close { display: flex; }

table { width: 100%; height: 96px; border-collapse: collapse; table-layout: fixed; background: #fff; color: #282828; font-size: 8px; line-height: 12px; }
th, td { padding: 0 0 0 2px; text-align: left; font-weight: 500; white-space: nowrap; border-left: 1px solid #e6e6e6; }
th { padding-left: 1px; background: #a3a3a3; color: #f0f0f0; border-color: #b8b8b8; }
tbody tr:nth-child(even) { background: #dadada; }
tbody tr:nth-child(even) td { border-color: #cacaca; }
.strip { height: 4px; background: #dedede; }
.strip.scroll { background: linear-gradient(90deg, #777 52%, #dedede 52%) 0 0 / 100% 1px no-repeat #dedede; }

.plot { display: block; width: 100%; height: auto; background: #000; }
.grid { stroke: #303030; }
.zero { stroke: #8a8a8a; stroke-dasharray: 2 2; }
.zero.faint { stroke: #b9c48c; stroke-opacity: .6; }
.centre { stroke: #858585; stroke-dasharray: 2 3; }
.trace { fill: none; stroke-linejoin: round; }
.tiny { font-size: 6px; }
.note { font-size: 9px; }
.mini { font-size: 5px; }
.strong { font-weight: 700; font-size: 6px; }

.splitter { width: 8px; display: flex; flex-direction: column; align-items: center; justify-content: center; gap: 3px; background: #262626; border-right: 1px solid #484848; }
.splitter i { width: 2px; height: 2px; background: #e8e8e8; }
.side { width: 73px; display: flex; flex-direction: column; }
.side h3 { height: 14px; line-height: 10px; text-align: center; font-weight: 700; }
.tools { display: grid; grid-template-columns: 31px 31px; gap: 4px; padding: 0 2px 4px; border-bottom: 1px solid #484848; }
.tools button { height: 18px; line-height: 7px; border: 1px solid #505050; border-radius: 3px; background: #2a2a2a; }
.measures { height: 188px; margin-top: 4px; display: flex; flex-direction: column; justify-content: space-between; }
.meas { width: 71px; height: 30px; background: #c9c9c9; color: #1c1c1c; }
.meas header { display: flex; align-items: center; justify-content: space-between; height: 9px; padding: 0 3px 0 2px; background: #5a5a5a; color: #dadada; }
.meas header.active { background: #000; }
.meas p { padding: 1px 0 0 3px; line-height: 10px; }
.chips { display: flex; gap: 1px; }
.chips i { width: 5px; height: 5px; border-radius: 1px; }
.drawer { flex: 1; display: flex; align-items: flex-end; justify-content: space-between; padding: 0 12px 3px 2px; }
.drawer button { width: 31px; height: 18px; border: 1px solid #484848; border-radius: 3px; display: flex; align-items: center; justify-content: center; }

.bar { height: 41px; display: flex; align-items: flex-start; padding: 1px 5px 0 1px; background: #2b2b2b; box-sizing: border-box; }
.channels { flex: 1; display: flex; gap: 2px; }
.card { height: 39px; background: #c9c9c9; color: #1c1c1c; white-space: nowrap; }
.card h4 { height: 9px; padding-left: 2px; background: #5a5a5a; color: #e0e0e0; }
.card p { padding: 2px 0 0 4px; display: flex; flex-direction: column; }
.channel { position: relative; width: 44px; }
.channel b { position: absolute; right: 2px; bottom: 2px; font-size: 5px; line-height: 5px; }
.channel sub { font-size: 5px; line-height: 5px; }
.group { display: flex; gap: 3px; margin-right: 11px; }
.wide { gap: 5px; margin-right: 10px; }
.slot { position: relative; width: 19px; height: 39px; padding-top: 4px; border: 1px solid #484848; border-radius: 2px; background: #262626; line-height: 8px; text-align: center; display: flex; align-items: center; justify-content: center; }
.slot i { position: absolute; left: 1px; right: 1px; top: 3px; height: 1px; background: #4a4a4a; }
.number { font-size: 9px; }
.horizontal { width: 109px; margin-right: 5px; }
.pairs { display: grid; grid-template-columns: 52px 1fr; padding: 2px 0 0 3px; }
.trigger { width: 78px; margin-right: 5px; }
.card .source { flex-direction: row; align-items: center; gap: 5px; height: 9px; padding: 0 0 0 3px; white-space: pre; }
.trigger h4 { margin-bottom: 2px; }
.source em { width: 13px; height: 6px; border: 1px solid #4a4a30; border-radius: 2px; font-style: normal; font-size: 6px; line-height: 6px; text-align: center; }
.acquisition { width: 73px; margin-right: 4px; }
.mode { display: flex; }
.mode span:first-child { width: 29px; }
.status { width: 44px; display: flex; flex-direction: column; gap: 5px; text-align: center; white-space: nowrap; }
.status button { height: 17px; border-radius: 2px; background: #fb1e28; color: #ffd8d8; font-weight: 700; }
.status time { height: 17px; background: #dcdcdc; color: #1c1c1c; line-height: 8px; display: block; }
</style>
